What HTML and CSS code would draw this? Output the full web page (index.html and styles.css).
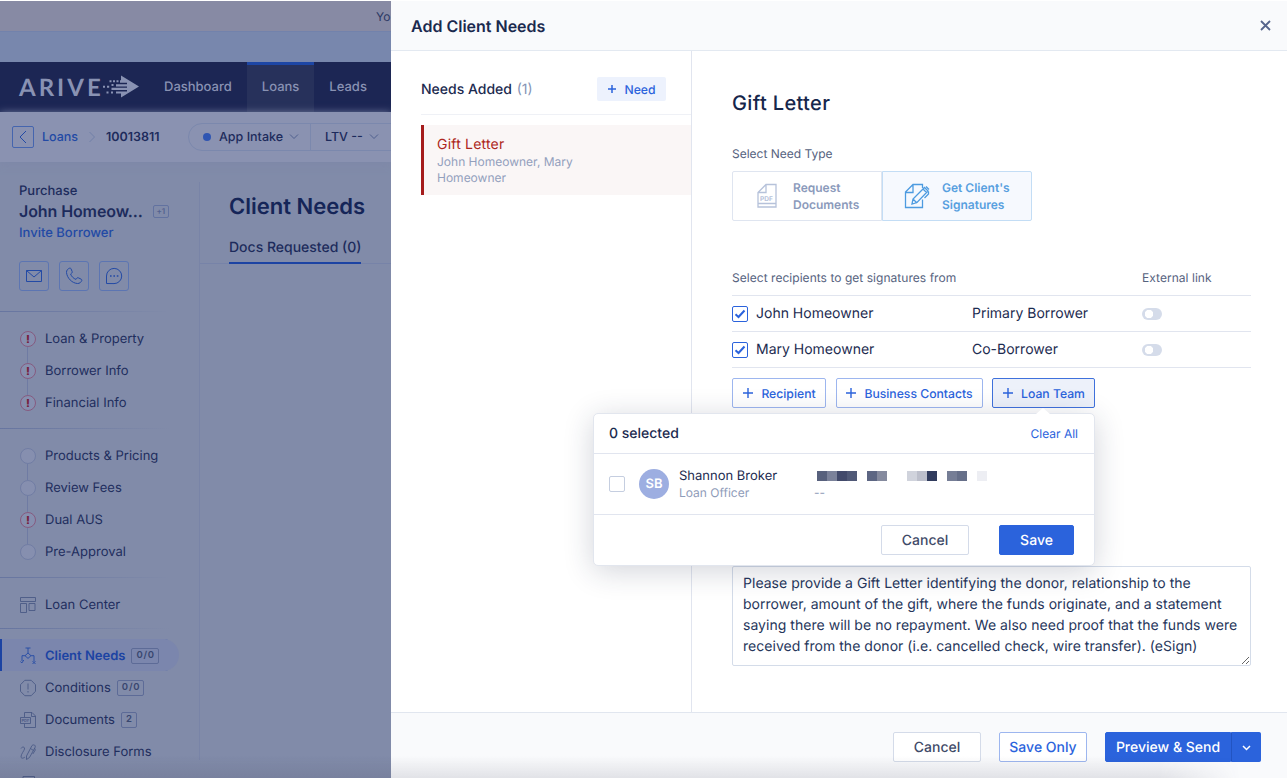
FILE: index.html
```html
<html>

<head>
    <title>Add Client Needs</title>
    <link rel="stylesheet" href="styles.css">
</head>

<body>
    <div class="page">
        <div class="banner">Yo</div>
        <div class="strip"></div>
        <nav class="navbar">
            <div class="logo">
                <span>ARIVE</span>
                <svg width="37" height="24" viewBox="0 0 37 24" fill="currentColor">
                    <path d="M18 .5 L36 11.500 L18 22.500 V18.600 H13 V16.400 H24 V15 H8.500 V12.800 H24 V11.400 H13 V9.200 H24 V7.700 H17 V5.300 H18 Z" />
                    <path d="M0 10.800h2v2H0z M4 10.800h2.200v2H4z M8.500 9h2v2H8.500z M6.500 5.300h2v2h-2z M10 5.300h2v2h-2z M13.500 5.300h2v2h-2z M3.500 16.400h2v2h-2z M8 16.400h2v2H8z" />
                </svg>
            </div>
            <a class="nav-link">Dashboard</a>
            <a class="nav-link active">Loans</a>
            <a class="nav-link">Leads</a>
        </nav>
        <div class="crumbs">
            <span class="back"><svg width="10" height="14" viewBox="0 0 10 14"><path d="M8 1 L2 7 L8 13" /></svg></span>
            <a class="crumb-link">Loans</a>
            <svg class="crumb-sep" width="8" height="12" viewBox="0 0 8 12"><path d="M1.500 1 L6.500 6 L1.500 11" /></svg>
            <span class="crumb-id">10013811</span>
            <div class="pill">
                <span class="pill-part stage"><i></i>App Intake<svg width="10" height="6" viewBox="0 0 10 6"><path d="M1 .5 L5 4.500 L9 .5" /></svg></span>
                <span class="pill-part ltv">LTV --<svg width="10" height="6" viewBox="0 0 10 6"><path d="M1 .5 L5 4.500 L9 .5" /></svg></span>
            </div>
        </div>
        <div class="columns">
            <aside class="sidebar">
                <div class="borrower">
                    <div class="purpose">Purchase</div>
                    <div class="name">John Homeow...<span class="plus-one">+1</span></div>
                    <div class="invite">Invite Borrower</div>
                    <div class="contact">
                        <span><svg width="18" height="18" viewBox="0 0 18 18"><path d="M1.500 3.500h15v11h-15z M1.500 3.500 L9 10 L16.500 3.500" /></svg></span>
                        <span><svg width="18" height="18" viewBox="0 0 18 18"><path d="M4.500 1.200 C3 1.800 1.300 3.200 1.500 5.500 C2 11 7 16.200 12.500 16.500 C14.800 16.600 16.200 15 16.800 13.500 C17 12.900 16.700 12.500 16.200 12.200 L13.300 10.800 C12.600 10.500 12.200 10.700 11.900 11.200 L11 12.400 C8.500 11.500 6.500 9.500 5.600 7 L6.800 6 C7.300 5.600 7.400 5.200 7.200 4.600 L6 1.800 C5.700 1.200 5.200 .9 4.500 1.200z" /></svg></span>
                        <span><svg width="18" height="18" viewBox="0 0 18 18"><path d="M1.500 16.500 V9 A7.600 7.600 0 1 1 9 16.600 Z" /><path class="dots" d="M5 9h1.600 M8.400 9H10 M11.800 9h1.600" /></svg></span>
                    </div>
                </div>
                <div class="group steps">
                    <a class="item"><i class="dot alert">!</i>Loan &amp; Property</a>
                    <a class="item"><i class="dot alert">!</i>Borrower Info</a>
                    <a class="item"><i class="dot alert">!</i>Financial Info</a>
                </div>
                <div class="group steps">
                    <a class="item"><i class="dot"></i>Products &amp; Pricing</a>
                    <a class="item"><i class="dot"></i>Review Fees</a>
                    <a class="item"><i class="dot alert">!</i>Dual AUS</a>
                    <a class="item"><i class="dot"></i>Pre-Approval</a>
                </div>
                <div class="group center">
                    <a class="item"><svg class="icon" width="16" height="18" viewBox="0 0 16 18"><path d="M.5 1.500h15v4H.5z M.5 7.500h6v9h-6z M9 7.500h6v7H9z" /></svg>Loan Center</a>
                </div>
                <div class="group tools">
                    <a class="item active"><svg class="icon" width="16" height="18" viewBox="0 0 16 18"><path d="M5.500 1h5 M8 1v5 M8 6 L11 8.700 L8 11.400 L5 8.700z M5 8.700H2V14 M11 8.700h3V14 M.5 14.500l1.300 1.500 2-3 M12.500 14l3 3 M15.500 14l-3 3" /></svg>Client Needs<b class="count">0/0</b></a>
                    <a class="item"><svg class="icon" width="16" height="18" viewBox="0 0 16 18"><path d="M4.800 1.300h6.400l4.300 4.400v6.600l-4.300 4.400H4.800L.5 12.300V5.700z M8 4.500v6 M8 12v1.500" /></svg>Conditions<b class="count">0/0</b></a>
                    <a class="item"><svg class="icon" width="16" height="18" viewBox="0 0 16 18"><path d="M4.500 6V1.500h7.500l3.500 3.500v11.500h-11V13 M11.500 1.500V5.500h4 M.5 6.500h10v6H.5z" /><text x="1.500" y="11.300">PDF</text></svg>Documents<b class="count">2</b></a>
                    <a class="item"><svg class="icon" width="16" height="18" viewBox="0 0 16 18"><path d="M1 5.500C2 3.500 5 3.500 4.500 6C4 8 1 11 1 14c.3 2 3 1 4 0 M12 2.500c2-1.500 4 0 3 2L9.500 14.500 6.500 16.500V13z M10.500 5.500l3 2 M14.500 5l.8 2-2.500 4" /></svg>Disclosure Forms</a>
                    <a class="item"><svg class="icon" width="16" height="18" viewBox="0 0 16 18"><path d="M3 1.500h11.500v15H3z M6 5h5" /></svg></a>
                </div>
            </aside>
            <main class="content">
                <h1>Client Needs</h1>
                <div class="tabs"><span class="tab">Docs Requested (0)</span></div>
            </main>
        </div>
    </div>

    <div class="drawer">
        <header class="drawer-head">
            <span>Add Client Needs</span>
            <svg width="11" height="11" viewBox="0 0 11 11"><path d="M1 1 L10 10 M10 1 L1 10" /></svg>
        </header>
        <div class="drawer-body">
            <section class="needs">
                <div class="needs-head">
                    <span class="needs-title">Needs Added <em>(1)</em></span>
                    <button class="add-need"><svg width="10" height="10" viewBox="0 0 10 10"><path d="M5 1v8 M1 5h8" /></svg>Need</button>
                </div>
                <div class="need">
                    <div class="need-name">Gift Letter</div>
                    <div class="need-people">John Homeowner, Mary Homeowner</div>
                </div>
            </section>
            <section class="detail">
                <h2>Gift Letter</h2>
                <div class="label">Select Need Type</div>
                <div class="types">
                    <div class="type">
                        <svg width="20" height="26" viewBox="0 0 20 26"><path d="M1 12V9.500L9 1.500h10v22.500H1V12 M1 9.500h8v-8 M1 20.500h18" /><text x="3" y="17.500">PDF</text></svg>
                        <span>Request<br>Documents</span>
                    </div>
                    <div class="type selected">
                        <svg width="26" height="26" viewBox="0 0 26 26"><path d="M18.500 5V1.500H9L1.500 9v15.500h17v-8 M1.500 9.500h7.500v-8 M8 21l1-5L20.500 4.500l3.500 3.500L13 19.500z M19 6l3.500 3.500 M22 3.500l3 3 M24.500 8.500v2.500l-4 4 M9 16l4 4" /></svg>
                        <span>Get Client's<br>Signatures</span>
                    </div>
                </div>
                <div class="table">
                    <div class="row head"><span>Select recipients to get signatures from</span><span></span><span>External link</span></div>
                    <div class="row">
                        <span class="who"><i class="check"><svg width="12" height="10" viewBox="0 0 12 10"><path d="M1.500 5.300 L4.500 8 L10.500 1.500" /></svg></i>John Homeowner</span>
                        <span>Primary Borrower</span>
                        <i class="toggle"></i>
                    </div>
                    <div class="row">
                        <span class="who"><i class="check"><svg width="12" height="10" viewBox="0 0 12 10"><path d="M1.500 5.300 L4.500 8 L10.500 1.500" /></svg></i>Mary Homeowner</span>
                        <span>Co-Borrower</span>
                        <i class="toggle"></i>
                    </div>
                </div>
                <div class="adders">
                    <button class="adder recipient"><svg width="12" height="12" viewBox="0 0 12 12"><path d="M6 1v10 M1 6h10" /></svg>Recipient</button>
                    <button class="adder contacts"><svg width="12" height="12" viewBox="0 0 12 12"><path d="M6 1v10 M1 6h10" /></svg>Business Contacts</button>
                    <div class="team">
                        <button class="adder open"><svg width="12" height="12" viewBox="0 0 12 12"><path d="M6 1v10 M1 6h10" /></svg>Loan Team</button>
                        <div class="popover">
                            <div class="pop-head"><span>0 selected</span><a>Clear All</a></div>
                            <div class="member">
                                <i class="check empty"></i>
                                <span class="avatar">SB</span>
                                <div class="member-name">Shannon Broker<small>Loan Officer</small></div>
                                <div class="member-mail">
                                    <svg width="170" height="10" shape-rendering="crispEdges">
                                        <rect width="10" height="10" fill="#58617d" />
                                        <rect x="10" width="10" height="10" fill="#7b829a" />
                                        <rect x="20" width="10" height="10" fill="#424a6b" />
                                        <rect x="30" width="10" height="10" fill="#505977" />
                                        <rect x="50" width="10" height="10" fill="#5d6683" />
                                        <rect x="60" width="10" height="10" fill="#858a9e" />
                                        <rect x="90" width="10" height="10" fill="#d0d3dc" />
                                        <rect x="100" width="10" height="10" fill="#bcbfcb" />
                                        <rect x="110" width="10" height="10" fill="#303b5d" />
                                        <rect x="130" width="10" height="10" fill="#767e96" />
                                        <rect x="140" width="10" height="10" fill="#666f89" />
                                        <rect x="160" width="10" height="10" fill="#edeef3" />
                                    </svg>
                                    <small>--</small>
                                </div>
                            </div>
                            <div class="pop-foot">
                                <button class="btn">Cancel</button>
                                <button class="btn primary">Save</button>
                            </div>
                        </div>
                    </div>
                </div>
                <textarea class="note">Please provide a Gift Letter identifying the donor, relationship to the borrower, amount of the gift, where the funds originate, and a statement saying there will be no repayment. We also need proof that the funds were received from the donor (i.e. cancelled check, wire transfer). (eSign)</textarea>
            </section>
        </div>
        <footer class="drawer-foot">
            <button class="btn">Cancel</button>
            <button class="btn outline">Save Only</button>
            <div class="split">
                <button class="btn primary">Preview &amp; Send</button>
                <button class="btn primary caret"><svg width="9" height="6" viewBox="0 0 9 6"><path d="M1 1 L4.500 4.500 L8 1" /></svg></button>
            </div>
        </footer>
    </div>
    <div class="edge-shade"></div>
</body>

</html>
```
FILE: styles.css
```css
* {
    box-sizing: border-box;
    font-family: Inter, "Liberation Sans", sans-serif;
}

html, body {
    width: 100%;
    height: 100%;
    margin: 0;
    overflow: hidden;
}

body {
    display: flex;
    font-size: 14px;
    color: #1c2b50;
    position: relative;
    text-rendering: geometricPrecision;
}

svg {
    fill: none;
    stroke: currentColor;
    flex: none;
}

button, textarea {
    padding: 0;
    text-rendering: inherit;
}

i, em {
    font-style: normal;
}

/* page under the drawer */
.page {
    width: 391px;
    height: 778px;
    overflow: hidden;
    flex: none;
    background: #818ba9;
    color: #1d2b5c;
    display: flex;
    flex-direction: column;
    border-top: 1px solid #fff;
}

.banner {
    height: 31px;
    flex: none;
    background: #878aa4;
    border-bottom: 1px solid #7282ac;
    padding-left: 376px;
    line-height: 31px;
    font-size: 12px;
    white-space: nowrap;
    color: #2c3965;
}

.strip {
    height: 30px;
    flex: none;
    background: #7887ad;
}

.navbar {
    height: 50px;
    flex: none;
    background: #1c2654;
    display: flex;
    color: #8992b3;
}

.logo {
    width: 149px;
    padding-left: 19px;
    display: flex;
    align-items: center;
}

.logo span {
    font-family: Lato, sans-serif;
    font-weight: bold;
    font-size: 24px;
    letter-spacing: 3px;
    width: 84px;
}

.logo svg {
    stroke: none;
    fill: currentColor;
}

.nav-link {
    padding: 0 15px;
    line-height: 51px;
    height: 50px;
    font-weight: 500;
    font-size: 13px;
}

.nav-link.active {
    background: #27315b;
    box-shadow: inset 0 3px #1d46a5;
}

.crumbs {
    height: 50px;
    flex: none;
    background: #8a92b1;
    display: flex;
    align-items: center;
    padding-left: 12px;
    font-size: 12.500px;
    font-weight: 500;
    box-shadow: 0 1px 8px #7d87a8;
}

.crumbs > * {
    flex: none;
}

.back {
    width: 22px;
    height: 22px;
    border: 1px solid #4565ae;
    border-radius: 2px;
    display: flex;
    align-items: center;
    justify-content: center;
    color: #234aa5;
}

.crumb-link {
    margin-left: 8px;
    color: #234aa5;
    width: 46px;
}

.crumb-sep {
    color: #7180a8;
    margin-right: 10px;
}

.crumb-id {
    font-weight: 600;
    width: 82px;
}

.pill {
    height: 28px;
    width: 400px;
    border: 1px solid #7b88ad;
    border-radius: 14px;
    display: flex;
    align-items: center;
}

.pill-part {
    display: flex;
    align-items: center;
    height: 26px;
}

.pill-part svg {
    margin-left: 6px;
    color: #4f5e8d;
}

.stage {
    width: 122px;
    padding-left: 14px;
    border-right: 1px solid #7b88ad;
}

.stage i {
    width: 8px;
    height: 8px;
    border-radius: 50%;
    background: #2f55b2;
    margin-right: 8px;
}

.ltv {
    padding-left: 14px;
}

.columns {
    display: flex;
    flex: 1;
    min-height: 0;
}

.sidebar {
    width: 199px;
    flex: none;
}

.borrower {
    padding: 20px 0 0 19px;
    height: 149px;
}

.purpose {
    font-size: 13px;
    line-height: 18px;
    font-weight: 500;
}

.name {
    font-size: 16px;
    line-height: 22px;
    font-weight: 600;
    letter-spacing: -.1px;
    display: flex;
    align-items: center;
}

.plus-one {
    margin-left: 10px;
    width: 16px;
    line-height: 11px;
    border: 1px solid #6272a0;
    border-radius: 2px;
    font-size: 8px;
    text-align: center;
    color: #53618f;
}

.invite {
    font-size: 13px;
    line-height: 22px;
    font-weight: 500;
    color: #234aa5;
}

.contact {
    display: flex;
    gap: 10px;
    margin-top: 17px;
}

.contact span {
    width: 30px;
    height: 30px;
    border: 1px solid #5c75b2;
    border-radius: 3px;
    display: flex;
    align-items: center;
    justify-content: center;
    color: #234aa5;
}

.contact .dots {
    stroke-width: 1.500;
}

.group {
    padding: 10px 0;
    border-top: 1px solid;
    border-image: linear-gradient(90deg, #6775a0, #818ba9 170px) 1;
}

.item {
    display: flex;
    align-items: center;
    height: 32px;
    padding: 1px 0 0 20px;
    font-size: 13px;
    color: #1f2e5e;
}

.dot {
    width: 16px;
    height: 16px;
    border: 1px solid #717da4;
    border-radius: 50%;
    background: #868faf;
    margin-right: 9px;
    text-align: center;
    line-height: 14px;
    font-size: 11px;
    position: relative;
}

.steps .item + .item .dot::before {
    content: "";
    position: absolute;
    left: 6px;
    top: -17px;
    height: 16px;
    border-left: 1px solid #6f7ba3;
}

.alert {
    border-color: #865b80;
    color: #762140;
    font-weight: 800;
}

.icon {
    margin-right: 9px;
    color: #4b5a86;
    stroke-width: .9;
}

.icon text {
    font-size: 4px;
    font-weight: 600;
    stroke: none;
    fill: currentColor;
}

.center {
    height: 51px;
}

.steps {
    height: 117px;
}

.steps + .steps {
    height: 149px;
}

.item.active {
    width: 179px;
    background: #7b86ad;
    border-radius: 0 16px 16px 0;
    box-shadow: inset 2px 0 #1c43a3;
    color: #1c43a3;
    font-weight: 600;
}

.active .icon {
    color: #234aa5;
}

.count {
    border: 1px solid #5d6b97;
    border-radius: 2px;
    height: 16px;
    line-height: 14px;
    padding: 0 3px 0 4px;
    margin-left: 6px;
    font-size: 9.500px;
    letter-spacing: .8px;
    font-weight: 600;
    color: #38466f;
}

.content {
    flex: 1;
    margin-top: 20px;
    border-left: 1px solid #7984a7;
    height: 578px;
    white-space: nowrap;
}

.content h1 {
    margin: 11px 0 0 29px;
    font-size: 22px;
    line-height: 28px;
    font-weight: 600;
    color: #152558;
}

.tabs {
    height: 43px;
    padding-left: 29px;
    border-bottom: 1px solid #7783a8;
}

.tab {
    display: inline-block;
    height: 43px;
    line-height: 54px;
    border-bottom: 2px solid #1c43a3;
    font-weight: 500;
}

/* drawer */
.drawer {
    flex: 1;
    height: 778px;
    display: flex;
    flex-direction: column;
    background: #fff;
    padding-top: 1px;
}

.drawer-head {
    height: 50px;
    flex: none;
    background: #f9fafc;
    border-bottom: 1px solid #e3e9f1;
    display: flex;
    align-items: center;
    justify-content: space-between;
    padding: 0 16px 0 20px;
    font-size: 16px;
    font-weight: 600;
    color: #1a294e;
}

.drawer-head svg {
    stroke-width: 1.800;
    color: #56658c;
}

.drawer-body {
    flex: 1;
    display: flex;
    min-height: 0;
}

.needs {
    width: 301px;
    flex: none;
    border-right: 1px solid #e1e5ef;
    padding-left: 30px;
}

.needs-head {
    height: 64px;
    padding: 13px 25px 0 0;
    border-bottom: 1px solid #eff1f6;
    display: flex;
    align-items: center;
    justify-content: space-between;
    margin-bottom: 10px;
}

.needs-title {
    font-weight: 500;
    padding-top: 1px;
}

.needs-title em {
    font-weight: 400;
    color: #8594b5;
    margin-left: 1px;
}

.add-need {
    width: 69px;
    height: 24px;
    background: #edf2fd;
    border: 0;
    border-radius: 2px;
    color: #2b63dc;
    font-size: 12.200px;
    font-weight: 500;
    display: flex;
    align-items: center;
    justify-content: center;
    gap: 7px;
}

.add-need svg {
    stroke-width: 1.500;
}

.need {
    height: 70px;
    border-left: 3px solid #a51d1d;
    background: #faf6f6;
    padding: 10px 100px 0 13px;
}

.need-name {
    color: #ad2620;
    line-height: 19px;
    letter-spacing: .2px;
}

.need-people {
    font-size: 12px;
    line-height: 16px;
    color: #93a0bd;
}

.detail {
    padding: 36px 36px 0 40px;
    flex: 1;
}

h2 {
    margin: 0;
    font-size: 20px;
    line-height: 32px;
    font-weight: 500;
    letter-spacing: .35px;
    color: #16264b;
}

.label {
    margin-top: 26px;
    font-size: 12px;
    line-height: 18px;
    color: #56627e;
}

.types {
    display: flex;
    margin-top: 8px;
    height: 50px;
}

.type {
    width: 150px;
    border: 1px solid #dfe5f0;
    border-radius: 2px 0 0 2px;
    display: flex;
    align-items: center;
    padding-left: 24px;
    font-size: 12px;
    line-height: 17px;
    font-weight: 600;
    color: #8b9abb;
}

.type svg {
    margin-right: 16px;
    color: #b6c2da;
    stroke-width: 1.300;
}

.type text {
    font-size: 6.500px;
    font-weight: 700;
    stroke: none;
    fill: currentColor;
}

.type.selected {
    border-color: #c3ddf5;
    background: #f6f9fe;
    color: #58a0df;
    padding-left: 21px;
    border-radius: 0 2px 2px 0;
}

.type.selected svg {
    color: #4d9be0;
    margin-right: 12px;
}

.table {
    margin-top: 40px;
}

.row {
    display: grid;
    grid-template-columns: 240px 170px 1fr;
    align-items: center;
    height: 36px;
    border-bottom: 1px solid #e1e5ef;
}

.row.head {
    height: 35px;
    padding-bottom: 1px;
    font-size: 12px;
    color: #56627e;
    white-space: nowrap;
    letter-spacing: .04px;
}

.who {
    display: flex;
    align-items: center;
}

.check {
    width: 16px;
    height: 16px;
    border: 1px solid #2b63dc;
    border-radius: 2px;
    margin-right: 8px;
    display: flex;
    align-items: center;
    justify-content: center;
    color: #2b63dc;
}

.check svg {
    stroke-width: 2;
}

.toggle {
    width: 20px;
    height: 12px;
    border-radius: 6px;
    background: radial-gradient(circle at 7px 6px, #fff 4px, #d5dcea 4.500px);
}

.adders {
    display: flex;
    gap: 9.500px;
    margin-top: 10px;
}

.adder {
    height: 30px;
    width: 94px;
    border: 1px solid #9db6ef;
    border-radius: 2px;
    background: #fff;
    color: #2b63dc;
    font-size: 12.200px;
    font-weight: 500;
    display: flex;
    align-items: center;
    justify-content: center;
    gap: 7px;
    white-space: nowrap;
}

.adder svg {
    stroke-width: 1.400;
}

.contacts {
    width: 147px;
}

.open {
    width: 103px;
    background: #edf1fa;
    border-color: #3f71dc;
}

.team {
    position: relative;
}

.popover {
    position: absolute;
    right: 0;
    top: 35px;
    width: 502px;
    height: 153px;
    background: #fff;
    border: 1px solid #e2e6ee;
    border-radius: 5px;
    box-shadow: 0 5px 30px rgba(30, 40, 70, .2);
}

.popover::before {
    content: "";
    position: absolute;
    left: 442px;
    top: -6px;
    border: 7px solid transparent;
    border-top: 0;
    border-bottom: 6px solid #fff;
}

.pop-head {
    height: 40px;
    border-bottom: 1px solid #e1e5ef;
    padding: 0 16px 1px 15px;
    display: flex;
    align-items: center;
    justify-content: space-between;
    font-weight: 500;
}

.pop-head a {
    font-size: 12px;
    font-weight: 400;
    color: #2b63dc;
}

.member {
    height: 61px;
    border-bottom: 1px solid #e1e5ef;
    display: flex;
    align-items: center;
    padding-left: 14.500px;
}

.empty {
    border-color: #c5cee0;
    margin-right: 14.500px;
}

.avatar {
    width: 30px;
    height: 30px;
    border-radius: 50%;
    background: #9daee1;
    color: #fff;
    font-weight: 600;
    font-size: 13px;
    line-height: 31px;
    text-align: center;
    margin-right: 10px;
}

.member-name {
    width: 135px;
    font-size: 13px;
    line-height: 18px;
}

.member small {
    display: block;
    font-size: 12px;
    line-height: 16px;
    color: #8f9cb9;
}

.member-mail svg {
    display: block;
    stroke: none;
    margin: 4px 0 4px 3px;
}

.pop-foot {
    padding: 10px 20px;
    display: flex;
    justify-content: flex-end;
    gap: 30px;
}

.btn {
    width: 88px;
    height: 30px;
    padding-top: 1px;
    border: 1px solid #d4dbe9;
    border-radius: 2px;
    background: #fff;
    font-size: 14px;
    font-weight: 500;
    color: #3f4b68;
}

.primary {
    background: #2b63dc;
    border-color: #2b63dc;
    color: #fff;
}

.pop-foot .primary {
    width: 75px;
}

.note {
    display: block;
    width: 519px;
    height: 100px;
    margin-top: 158px;
    padding: 6px 10px;
    border: 1px solid #d4dce9;
    border-radius: 2px;
    outline: none;
    resize: vertical;
    font-size: 14px;
    line-height: 21px;
    letter-spacing: .03px;
    color: #26365b;
}

.drawer-foot {
    height: 66px;
    flex: none;
    background: #f9fafc;
    border-top: 1px solid #e1e6ef;
    display: flex;
    justify-content: flex-end;
    align-items: center;
    padding: 3px 26px 0 0;
    gap: 18px;
}

.outline {
    border-color: #9db6ef;
    color: #2b63dc;
}

.split {
    display: flex;
}

.split .btn {
    width: 126px;
    border-radius: 2px 0 0 2px;
}

.split .caret {
    width: 30px;
    border-left-color: #2254c2;
    border-radius: 0 2px 2px 0;
}

.caret svg {
    stroke-width: 1.500;
}

/* soft shade along the bottom of the window */
.edge-shade {
    position: absolute;
    left: 0;
    bottom: 0;
    width: 1240px;
    height: 22px;
    background: linear-gradient(transparent, rgba(60, 60, 80, .12));
    mask-image: linear-gradient(90deg, #000 1160px, transparent);
    pointer-events: none;
}
```
